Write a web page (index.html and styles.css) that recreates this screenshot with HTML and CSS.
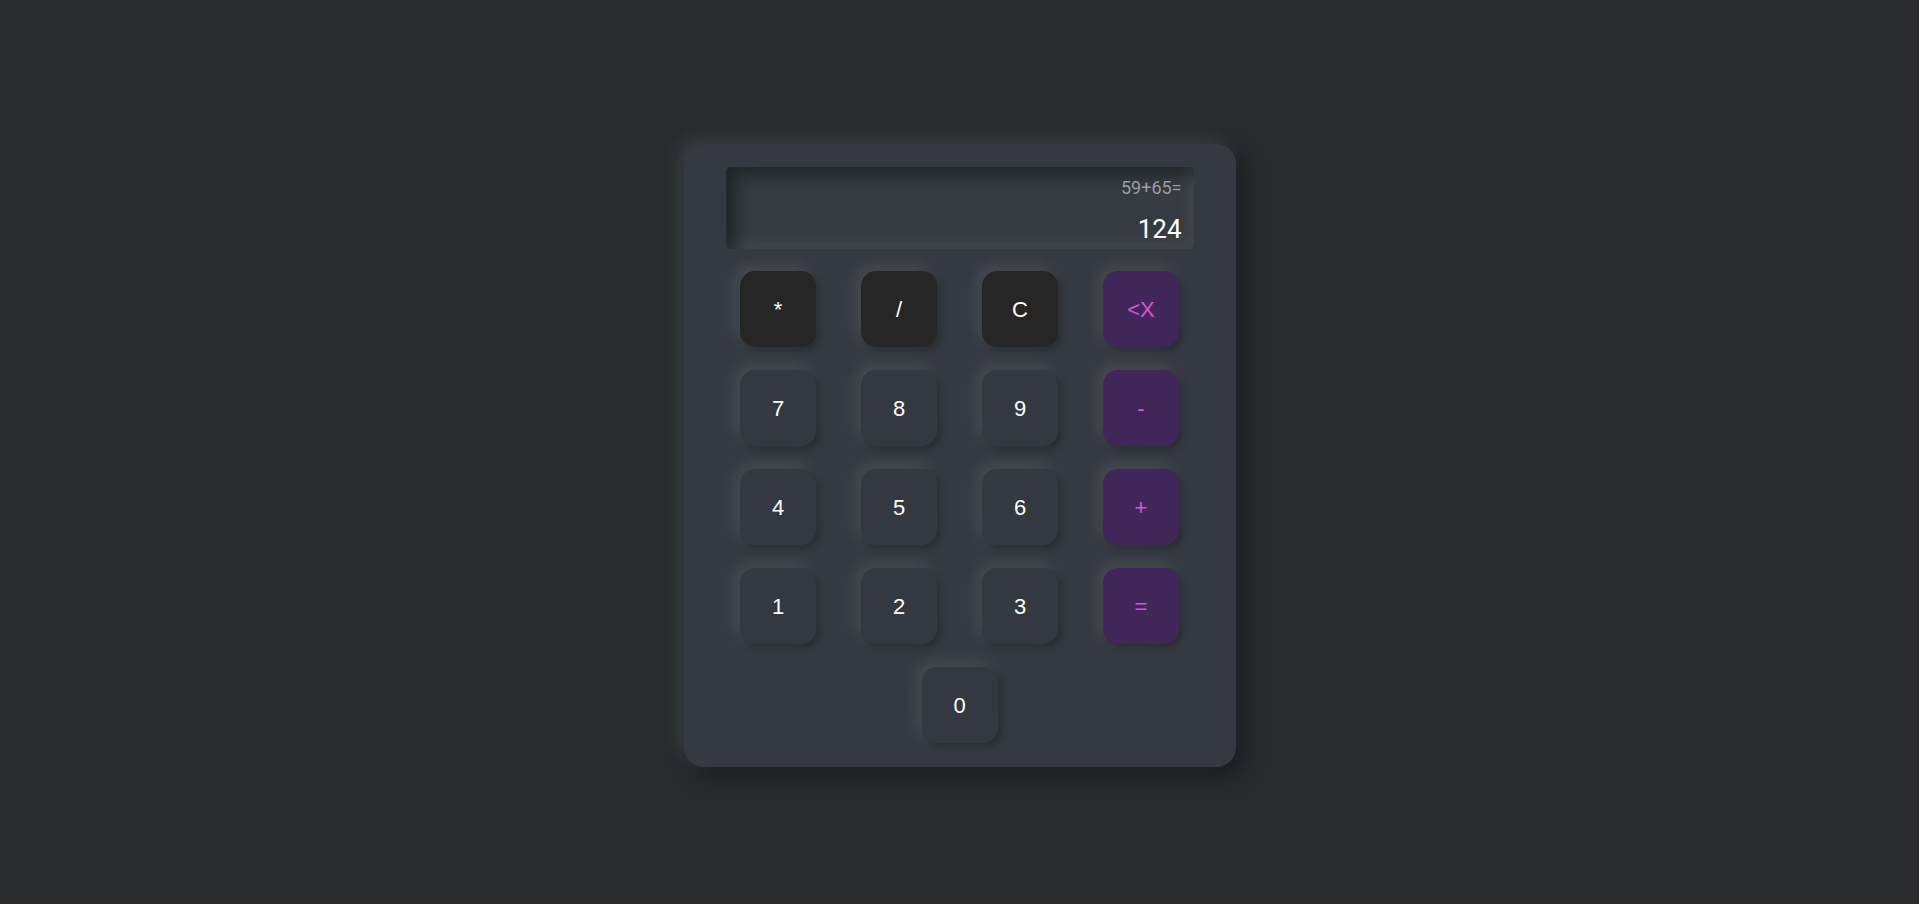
FILE: index.html
```html
<!DOCTYPE html>
<html lang="en">
<head>
<meta charset="utf-8">
<title>Calculator</title>
<link rel="stylesheet" href="styles.css">
</head>
<body>
<main class="page">
  <div class="calculator">
    <div class="display">
      <div class="expression">59+65=</div>
      <div class="result">124</div>
    </div>
    <div class="keys">
      <button class="key key-dark">*</button>
      <button class="key key-dark">/</button>
      <button class="key key-dark">C</button>
      <button class="key key-op">&lt;X</button>
      <button class="key">7</button>
      <button class="key">8</button>
      <button class="key">9</button>
      <button class="key key-op">-</button>
      <button class="key">4</button>
      <button class="key">5</button>
      <button class="key">6</button>
      <button class="key key-op">+</button>
      <button class="key">1</button>
      <button class="key">2</button>
      <button class="key">3</button>
      <button class="key key-op">=</button>
      <button class="key key-zero">0</button>
    </div>
  </div>
</main>
</body>
</html>
```

FILE: styles.css
```css
html, body {
  margin: 0;
  padding: 0;
  background: #282b2e;
}

.page {
  min-height: 904px;
  box-sizing: border-box;
  padding-top: 144px;
  display: flex;
  flex-direction: column;
  align-items: center;
}

.calculator {
  width: 552px;
  height: 623px;
  box-sizing: border-box;
  padding: 23px 42px 24px;
  background: #353941;
  border-radius: 20px;
  box-shadow: -6px -6px 18px rgba(255, 255, 255, 0.09), 8px 8px 20px rgba(0, 0, 0, 0.35);
  display: flex;
  flex-direction: column;
  gap: 22px;
}

.display {
  height: 82px;
  box-sizing: border-box;
  padding: 10px 12px 5px;
  border-radius: 5px;
  background: #363a41;
  box-shadow: inset 10px 8px 16px rgba(0, 0, 0, 0.38), inset -6px -8px 14px rgba(255, 255, 255, 0.07);
  display: flex;
  flex-direction: column;
  align-items: flex-end;
  gap: 16px;
  font-family: Roboto, "Liberation Sans", sans-serif;
}

.expression {
  font-size: 18px;
  color: #9c9c9c;
  line-height: normal;
}

.result {
  font-size: 26px;
  color: #ffffff;
  line-height: normal;
}

.keys {
  display: grid;
  grid-template-columns: repeat(4, 76px);
  grid-auto-rows: 76px;
  column-gap: 45px;
  row-gap: 23px;
  justify-content: center;
}

.key {
  border: none;
  margin: 0;
  padding: 2px 0 0;
  border-radius: 15px;
  background: #343840;
  color: #ffffff;
  font-family: "Liberation Sans", Arial, sans-serif;
  font-size: 22px;
  box-shadow: -5px -5px 15px rgba(255, 255, 255, 0.1), 3px 3px 7px rgba(0, 0, 0, 0.28);
  cursor: pointer;
}

.key-dark {
  background: #262626;
}

.key-op {
  background: #41265a;
  color: #d158d6;
}

.key-zero {
  grid-column: 1 / -1;
  justify-self: center;
  width: 76px;
}
```
